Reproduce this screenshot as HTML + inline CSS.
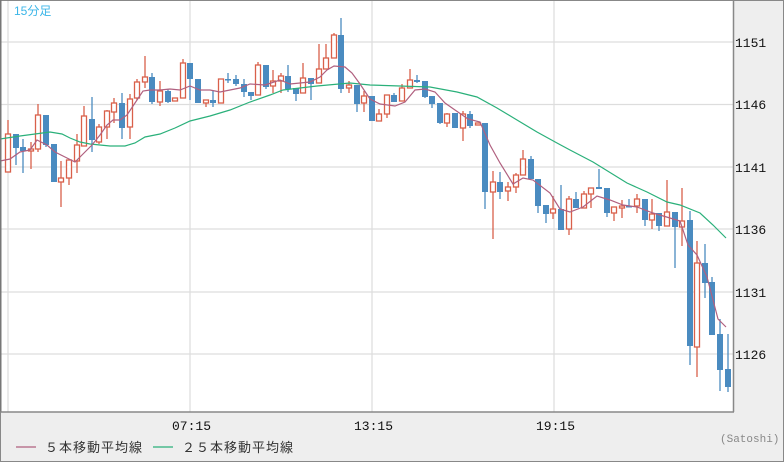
<!DOCTYPE html>
<html><head><meta charset="utf-8"><style>
html,body{margin:0;padding:0;background:#eeeeee;}
body{width:784px;height:462px;overflow:hidden;position:relative;}
svg{position:absolute;left:0;top:0;}
</style></head><body>
<svg width="784" height="462" xmlns="http://www.w3.org/2000/svg">
<rect x="0" y="0" width="784" height="462" fill="#eeeeee"/>
<rect x="0.5" y="0.5" width="783" height="461" fill="none" stroke="#888" stroke-width="1"/>
<rect x="1" y="1" width="732" height="411" fill="#ffffff"/>
<g stroke="#dddddd" stroke-width="1.2">
<line x1="1" y1="42" x2="733" y2="42"/><line x1="1" y1="104.5" x2="733" y2="104.5"/>
<line x1="1" y1="167" x2="733" y2="167"/><line x1="1" y1="229" x2="733" y2="229"/>
<line x1="1" y1="292" x2="733" y2="292"/><line x1="1" y1="354" x2="733" y2="354"/>
<line x1="8" y1="1" x2="8" y2="412"/><line x1="190" y1="1" x2="190" y2="412"/>
<line x1="372" y1="1" x2="372" y2="412"/><line x1="554" y1="1" x2="554" y2="412"/>
</g>
<g id="c"></g>
<polyline fill="none" stroke="#2ab07a" stroke-width="1.2" points="0,139 20,136 35,134 50,132 62,134 70,138 80,142 90,144 100,145 110,146 125,146 135,143 145,137 160,134 175,128 190,121 210,116 230,110 250,102 270,95 283,90 317,86 350,83 370,85 400,86 430,87 457,92 477,97 497,108 517,120 537,132 557,143 570,150 593,162 627,183 647,192 667,202 680,205 700,213 713,225 726,238"/>
<polyline fill="none" stroke="#b0607f" stroke-width="1.2" points="0,161 10,159 20,152 30,150 37,140 47,145 55,152 65,157 75,162 82,155 92,145 100,135 107,125 113,120 120,120 127,115 135,103 143,91 150,90 160,90 170,89 180,90 190,86 200,90 210,90 220,92 230,90 240,88 250,84 265,85 280,80 290,84 300,83 310,82 320,77 327,70 334,66 345,67 352,73 360,84 370,99 380,104 395,106 405,102 415,90 425,89 435,92 445,103 455,110 468,119 480,122 490,145 500,163 513,184 523,178 533,180 550,193 560,209 570,212 583,207 597,196 610,200 623,205 637,207 653,213 670,218 680,221 688,245 697,255 707,277 718,319 726,327"/>
<rect x="0" y="0" width="1.5" height="412" fill="#777"/>
<line x1="0" y1="412" x2="734" y2="412" stroke="#888" stroke-width="1.5"/>
<line x1="733.5" y1="0" x2="733.5" y2="412" stroke="#888" stroke-width="1.5"/>
<text x="14" y="15" font-family="Liberation Sans, Noto Sans CJK JP, sans-serif" font-size="12" fill="#3bb6e8">15分足</text>
<g font-family="Liberation Mono, monospace" font-size="13" fill="#111">
<text x="735" y="47">1151</text><text x="735" y="109">1146</text><text x="735" y="172">1141</text>
<text x="735" y="234">1136</text><text x="735" y="297">1131</text><text x="735" y="359">1126</text>
<text x="172" y="430">07:15</text><text x="354" y="430">13:15</text><text x="536" y="430">19:15</text>
</g>
<text x="720" y="442" font-family="Liberation Mono, monospace" font-size="11" fill="#888">(Satoshi)</text>
<line x1="16" y1="447" x2="36" y2="447" stroke="#b0607f" stroke-width="1.2"/>
<line x1="153" y1="447" x2="173" y2="447" stroke="#2ab07a" stroke-width="1.2"/>
<g font-family="Liberation Sans, Noto Sans CJK JP, sans-serif" font-size="13" fill="#333">
<text x="45" y="452" letter-spacing="1">５本移動平均線</text>
<text x="182" y="452" letter-spacing="1">２５本移動平均線</text>
</g>
</svg>
<script>
var d=[
[8,134,172,120,172,1],[16,134,148,134,165,0],[23,147,151,139,173,0],[31,149,151,142,169,1],[38,115,149,104,152,1],[46,115,145,115,147,0],[54,144,182,144,182,0],[61,178,182,161,207,1],[69,160,178,160,185,1],[77,145,161,134,173,1],[84,116,146,106,146,1],[92,119,140,97,152,0],[99,127,142,124,144,1],[107,111,127,110,139,1],[114,103,112,98,123,1],[122,103,128,93,139,0],[130,99,127,94,139,1],[137,82,98,79,100,1],[145,77,82,56,88,1],[152,77,102,73,104,0],[160,91,102,81,106,1],[168,91,102,89,103,0],[175,98,101,98,101,1],[183,63,98,59,98,1],[190,63,79,63,100,0],[198,79,103,79,103,0],[206,100,103,100,107,1],[213,100,103,91,107,0],[221,79,103,79,103,1],[228,79,80,73,83,0],[236,79,84,75,86,0],[244,84,92,79,97,0],[251,92,96,92,100,0],[258,65,95,62,95,1],[266,65,87,65,89,0],[273,81,86,70,93,1],[281,76,81,73,93,1],[288,76,89,65,92,0],[296,88,94,88,101,0],[303,78,93,63,93,1],[311,78,84,78,100,0],[319,69,83,44,83,1],[326,58,69,44,69,1],[334,35,58,33,58,1],[341,35,89,18,93,0],[349,85,88,81,93,1],[357,85,104,85,112,0],[364,96,103,91,112,1],[372,96,121,96,121,0],[379,114,121,109,121,1],[387,95,114,95,118,1],[394,95,102,93,102,0],[402,88,101,84,101,1],[410,80,88,69,88,1],[417,80,82,75,83,0],[425,81,97,81,98,0],[432,96,104,96,108,0],[440,103,123,103,124,0],[447,114,123,113,127,1],[455,113,128,113,128,0],[463,114,128,111,141,1],[470,114,126,111,128,0],[478,123,125,123,125,1],[485,123,192,123,209,0],[493,182,192,171,239,1],[500,182,192,172,199,0],[508,187,191,182,201,1],[516,175,187,173,193,1],[523,159,175,150,175,1],[531,159,179,156,179,0],[538,179,206,179,213,0],[546,205,214,205,223,0],[553,209,213,196,219,1],[561,209,230,185,230,0],[569,199,229,196,235,1],[576,199,208,192,208,0],[584,194,208,191,208,1],[591,188,194,188,208,1],[599,187,189,169,189,0],[607,188,213,188,217,0],[614,207,213,207,221,1],[622,206,208,200,218,1],[629,206,207,199,207,0],[637,199,206,194,213,1],[645,199,220,199,226,0],[652,214,220,199,229,1],[659,213,226,213,231,0],[667,212,226,180,226,1],[675,212,227,212,268,0],[682,221,227,188,246,1],[690,220,346,211,365,0],[697,263,347,241,377,1],[705,263,283,244,298,0],[712,282,335,277,335,0],[720,334,370,319,391,0],[728,369,387,334,392,0]];
var s='';
d.forEach(function(c){var x=c[0],t=c[1],b=c[2],col=c[5]?'#d9604a':'#4a8bc0';
s+='<line x1="'+x+'" y1="'+c[3]+'" x2="'+x+'" y2="'+c[4]+'" stroke="'+col+'" stroke-width="1.3"/>';
var h=Math.max(b-t,1.5);
if(c[5]) s+='<rect x="'+(x-2.5)+'" y="'+t+'" width="5" height="'+h+'" fill="#fff" stroke="'+col+'" stroke-width="1.3"/>';
else s+='<rect x="'+(x-3)+'" y="'+t+'" width="6" height="'+h+'" fill="'+col+'"/>';});
document.getElementById('c').innerHTML=s;
</script>
</body></html>
